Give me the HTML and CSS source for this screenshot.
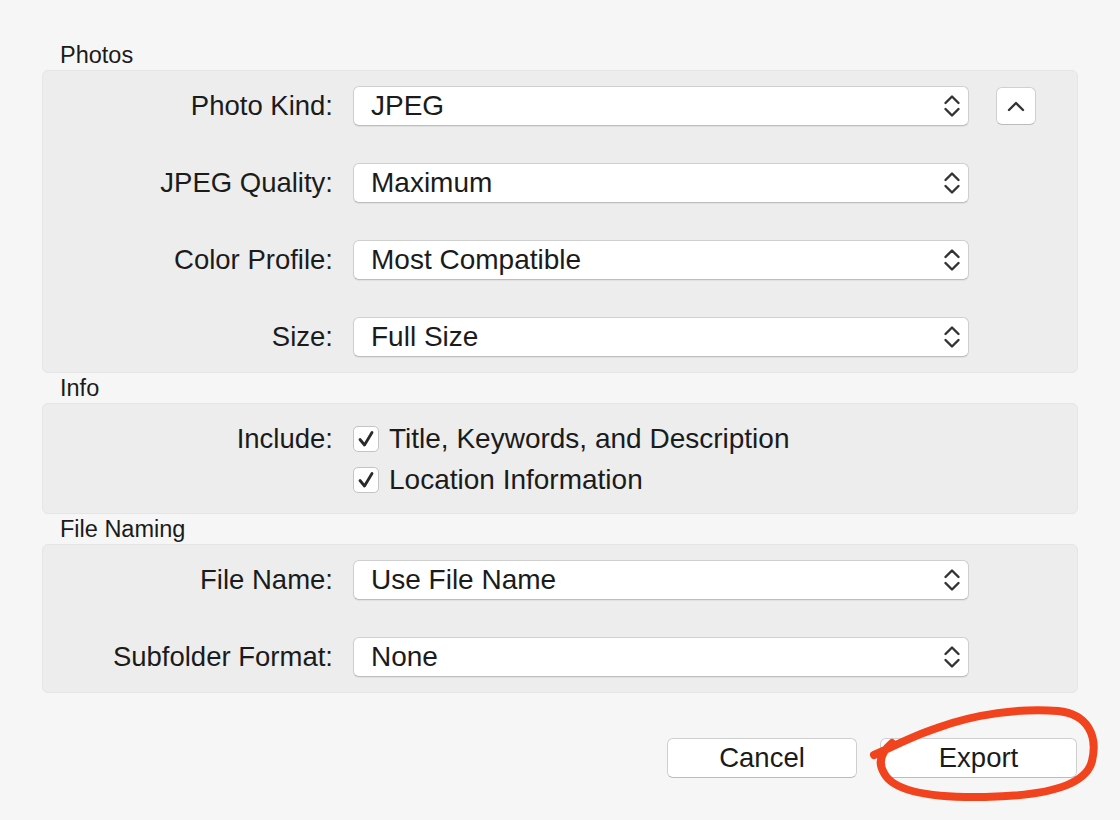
FILE: index.html
```html
<!DOCTYPE html>
<html>
  <head>
    <title>Export</title>
    <meta charset="UTF-8" />
    <link rel="stylesheet" href="styles.css">
  </head>

  <body>
    <div class="dialog">
      <div class="section-title">Photos</div>
      <div class="group">
        <div class="row">
          <span class="label">Photo Kind:</span>
          <div class="select">
            <span>JPEG</span>
            <svg class="chev" viewBox="0 0 18 26"><path d="M2.5 10 L9 3.5 L15.5 10 M2.5 16 L9 22.5 L15.5 16" /></svg>
          </div>
          <button class="disclose">
            <svg viewBox="0 0 20 12"><path d="M3 10 L10 3 L17 10" /></svg>
          </button>
        </div>
        <div class="row">
          <span class="label">JPEG Quality:</span>
          <div class="select">
            <span>Maximum</span>
            <svg class="chev" viewBox="0 0 18 26"><path d="M2.5 10 L9 3.5 L15.5 10 M2.5 16 L9 22.5 L15.5 16" /></svg>
          </div>
        </div>
        <div class="row">
          <span class="label">Color Profile:</span>
          <div class="select">
            <span>Most Compatible</span>
            <svg class="chev" viewBox="0 0 18 26"><path d="M2.5 10 L9 3.5 L15.5 10 M2.5 16 L9 22.5 L15.5 16" /></svg>
          </div>
        </div>
        <div class="row">
          <span class="label">Size:</span>
          <div class="select">
            <span>Full Size</span>
            <svg class="chev" viewBox="0 0 18 26"><path d="M2.5 10 L9 3.5 L15.5 10 M2.5 16 L9 22.5 L15.5 16" /></svg>
          </div>
        </div>
      </div>

      <div class="section-title">Info</div>
      <div class="group info">
        <div class="check-row">
          <span class="label">Include:</span>
          <span class="checkbox">
            <svg viewBox="0 0 24 24"><path d="M6 12.5 L10.5 18 L18 5.5" /></svg>
          </span>
          <span class="check-text">Title, Keywords, and Description</span>
        </div>
        <div class="check-row">
          <span class="label"></span>
          <span class="checkbox">
            <svg viewBox="0 0 24 24"><path d="M6 12.5 L10.5 18 L18 5.5" /></svg>
          </span>
          <span class="check-text">Location Information</span>
        </div>
      </div>

      <div class="section-title">File Naming</div>
      <div class="group">
        <div class="row">
          <span class="label">File Name:</span>
          <div class="select">
            <span>Use File Name</span>
            <svg class="chev" viewBox="0 0 18 26"><path d="M2.5 10 L9 3.5 L15.5 10 M2.5 16 L9 22.5 L15.5 16" /></svg>
          </div>
        </div>
        <div class="row">
          <span class="label">Subfolder Format:</span>
          <div class="select">
            <span>None</span>
            <svg class="chev" viewBox="0 0 18 26"><path d="M2.5 10 L9 3.5 L15.5 10 M2.5 16 L9 22.5 L15.5 16" /></svg>
          </div>
        </div>
      </div>

      <div class="footer">
        <button class="btn cancel">Cancel</button>
        <span class="export-wrap">
          <button class="btn export">Export</button>
          <svg class="scribble" viewBox="860 690 250 120">
            <path d="M874 754 C 892 746, 915 734, 937 727 C 975 713, 1020 707, 1058 710 C 1088 713, 1098 735, 1092 760 C 1086 785, 1045 795, 985 796 C 930 797, 893 790, 884 772 C 878 762, 880 752, 892 742" />
          </svg>
        </span>
      </div>
    </div>
  </body>
</html>
```

FILE: styles.css
```css
body {
  margin: 0;
  background: #f6f6f6;
  font-family: "Liberation Sans", Arial, sans-serif;
  color: #1b1b1b;
}

.dialog {
  width: 1036px;
  padding: 40px 0 40px 42px;
  display: flex;
  flex-direction: column;
}

.section-title {
  height: 30px;
  line-height: 30px;
  padding-left: 18px;
  font-size: 23.5px;
}

.group {
  background: #ededed;
  border: 1px solid #e5e5e5;
  border-radius: 6px;
  padding: 15px 0 15px 0;
  display: flex;
  flex-direction: column;
  gap: 37px;
}

.row {
  display: flex;
  align-items: center;
  height: 40px;
}

.label {
  width: 290px;
  flex-shrink: 0;
  text-align: right;
  font-size: 27.5px;
  margin-right: 20px;
}

.select {
  width: 616px;
  height: 40px;
  box-sizing: border-box;
  background: #fff;
  border: 1px solid #cfcfcf;
  border-bottom-color: #bdbdbd;
  border-radius: 6px;
  box-shadow: 0 1px 1px rgba(0, 0, 0, 0.06);
  display: flex;
  align-items: center;
  justify-content: space-between;
  padding: 0 7px 0 17px;
  font-size: 28px;
}

.chev {
  width: 18px;
  height: 26px;
}

.chev path,
.disclose path {
  fill: none;
  stroke: #333;
  stroke-width: 2.4;
  stroke-linecap: round;
  stroke-linejoin: round;
}

.disclose {
  margin-left: 27px;
  width: 40px;
  height: 38px;
  background: #fff;
  border: 1px solid #d0d0d0;
  border-bottom-color: #bcbcbc;
  border-radius: 6px;
  display: flex;
  align-items: center;
  justify-content: center;
  padding: 0;
}

.disclose svg {
  width: 20px;
  height: 12px;
}

.info {
  padding: 18px 0 16px 0;
  gap: 7px;
}

.check-row {
  display: flex;
  align-items: center;
  height: 34px;
}

.checkbox {
  width: 26px;
  height: 26px;
  box-sizing: border-box;
  background: #fff;
  border: 1px solid #c4c4c4;
  border-radius: 5px;
  display: flex;
}

.checkbox svg {
  width: 24px;
  height: 24px;
}

.checkbox path {
  fill: none;
  stroke: #2a2a2a;
  stroke-width: 2.8;
  stroke-linecap: round;
  stroke-linejoin: round;
}

.check-text {
  margin-left: 10px;
  font-size: 28px;
}

.footer {
  margin-top: 45px;
  display: flex;
  justify-content: flex-end;
  gap: 23px;
}

.btn {
  height: 40px;
  background: #fff;
  border: 1px solid #cfcfcf;
  border-bottom-color: #bcbcbc;
  border-radius: 6px;
  font-family: "Liberation Sans", Arial, sans-serif;
  font-size: 27.5px;
  color: #1b1b1b;
  padding: 0;
}

.cancel {
  width: 190px;
}

.export-wrap {
  position: relative;
  display: flex;
}

.export {
  width: 197px;
  margin-right: 1px;
}

.scribble {
  position: absolute;
  left: -20px;
  top: -47px;
  width: 250px;
  height: 120px;
  overflow: visible;
  pointer-events: none;
}

.scribble path {
  fill: none;
  stroke: #f1431d;
  stroke-width: 8;
  stroke-linecap: round;
  stroke-linejoin: round;
}
```
